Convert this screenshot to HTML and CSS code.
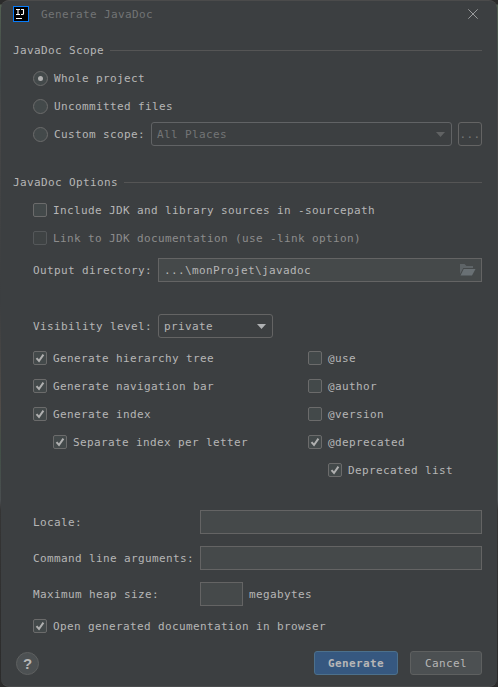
FILE: index.html
```html
<!DOCTYPE html>
<html lang="en">
<head>
<meta charset="utf-8">
<title>Generate JavaDoc</title>
<link rel="stylesheet" href="styles.css">
</head>
<body>
<svg width="0" height="0" class="defs">
  <symbol id="tick" viewBox="0 0 14 14"><path d="M3.5 7.2 L6 10 L10.4 3.6" fill="none" stroke="#b0b0b0" stroke-width="2"/></symbol>
</svg>
<main class="dialog">
  <header class="titlebar">
    <svg class="logo" width="16" height="16" viewBox="0 0 16 16">
      <rect x=".5" y=".5" width="15" height="15" fill="#000" stroke="#087cfa"/>
      <path d="M3 3.5h4M5 3.5v5M3 8.5h4M8 3.5h3M10.5 3.5V7.5Q10.5 8.5 9.5 8.5H8" fill="none" stroke="#fff" stroke-width="1.1"/>
      <path d="M3 12.5h6" stroke="#fff"/>
    </svg>
    <span class="title">Generate JavaDoc</span>
    <svg class="close" width="10" height="10" viewBox="0 0 10 10"><path d="M.3 .3L9.7 9.7M9.7 .3L.3 9.7" stroke="#999b9c" stroke-width="1"/></svg>
  </header>

  <h2 class="section"><span>JavaDoc Scope</span></h2>
  <div class="rows">
    <label class="row"><i class="radio on"></i><span>Whole project</span></label>
    <label class="row"><i class="radio"></i><span>Uncommitted files</span></label>
    <div class="row"><i class="radio"></i><span>Custom scope:</span>
      <div class="combo scope disabled"><span>All Places</span><svg width="9" height="5"><path d="M0 0h9L4.5 5z" fill="#606263"/></svg></div>
      <div class="more"><span>...</span></div>
    </div>
  </div>

  <h2 class="section options"><span>JavaDoc Options</span></h2>
  <div class="rows">
    <label class="row"><i class="check"></i><span>Include JDK and library sources in -sourcepath</span></label>
    <label class="row off"><i class="check"></i><span>Link to JDK documentation (use -link option)</span></label>
    <div class="row tall"><span class="name">Output directory:</span>
      <div class="field path"><span>...\monProjet\javadoc</span><svg width="16" height="12" viewBox="0 0 16 12"><path d="M0 10V0h4.5l2 2H13v2H3.3z" fill="#5e6467"/><path d="M3.7 5H15.5L12 11.5H.5z" fill="#697074"/></svg></div>
    </div>
    <div class="row tall visibility"><span class="name">Visibility level:</span>
      <div class="combo level"><span>private</span><svg width="9" height="5"><path d="M0 0h9L4.5 5z" fill="#afb1b3"/></svg></div>
    </div>
    <div class="columns">
      <div>
        <label class="row"><i class="check"><svg><use href="#tick"/></svg></i><span>Generate hierarchy tree</span></label>
        <label class="row"><i class="check"><svg><use href="#tick"/></svg></i><span>Generate navigation bar</span></label>
        <label class="row"><i class="check"><svg><use href="#tick"/></svg></i><span>Generate index</span></label>
        <label class="row sub"><i class="check"><svg><use href="#tick"/></svg></i><span>Separate index per letter</span></label>
      </div>
      <div>
        <label class="row"><i class="check"></i><span>@use</span></label>
        <label class="row"><i class="check"></i><span>@author</span></label>
        <label class="row"><i class="check"></i><span>@version</span></label>
        <label class="row"><i class="check"><svg><use href="#tick"/></svg></i><span>@deprecated</span></label>
        <label class="row sub"><i class="check"><svg><use href="#tick"/></svg></i><span>Deprecated list</span></label>
      </div>
    </div>
    <div class="form">
      <span>Locale:</span><div class="field"></div>
      <span>Command line arguments:</span><div class="field"></div>
      <span>Maximum heap size:</span><div class="heap"><div class="field"></div><span>megabytes</span></div>
    </div>
    <label class="row open"><i class="check"><svg><use href="#tick"/></svg></i><span>Open generated documentation in browser</span></label>
  </div>

  <footer class="footer">
    <div class="help">?</div>
    <div class="button primary">Generate</div>
    <div class="button">Cancel</div>
  </footer>
</main>
</body>
</html>
```

FILE: styles.css
```css
* { box-sizing: border-box; }
body {
  margin: 0;
  height: 687px;
  padding: 0 1px;
  overflow: hidden;
  background: linear-gradient(#2b2b2b 0 4px, #536052 5px, #3e4546 80px, #474747 110px, #3b3e40 300px, #514c48 410px, #425047 450px, #4a4e50 500px, #353535 510px, #2b2b2b);
  font: 11px/14px "DejaVu Sans Mono", monospace;
  letter-spacing: .378px;
  color: #b6b6b6;
}
.defs { position: absolute; }
.dialog {
  height: 687px;
  padding: 0 15px 0 12px;
  background: #3c3f41;
  border-top: 1px solid #4b4b4b;
  border-bottom: 1px solid #494b4c;
  border-radius: 8px;
}
.titlebar { display: flex; align-items: center; height: 26px; color: #727475; }
.title { margin-left: 12px; padding-top: 2px; }
.close { margin: 0 4px 0 auto; }
.section {
  display: flex;
  align-items: center;
  gap: 6px;
  height: 14px;
  margin: 16px 0 7px;
  font: inherit;
}
.section span, .row span, .form span { padding-top: 2px; white-space: nowrap; }
.section::after { content: ""; flex: 1; height: 1px; margin-top: 1px; background: #555; }
.section.options { margin: 27px 0 7px; }
.rows { padding-left: 20px; }
.row { display: flex; align-items: center; height: 28px; }
.row.tall { height: 36px; }
.row.off { color: #8c8c8c; }
.row.sub { padding-left: 20px; }
.check {
  flex: none;
  width: 14px;
  height: 14px;
  margin-right: 6px;
  border: 1px solid #6b6b6b;
  border-radius: 2px;
  background: #43494a;
}
.off .check { border-color: #55585a; background: #3f4344; }
.check svg { display: block; width: 14px; height: 14px; margin: -1px; }
.radio {
  display: flex;
  flex: none;
  width: 15px;
  height: 15px;
  margin: 1px 6px 0 0;
  border: 1px solid #6b6b6b;
  border-radius: 50%;
  background: #43494a;
}
.radio.on::after { content: ""; width: 5px; height: 5px; margin: auto; border-radius: 50%; background: #b0b0b0; }
.combo, .field, .more {
  display: flex;
  align-items: center;
  height: 24px;
  border: 1px solid #646464;
}
.combo { justify-content: space-between; padding: 0 6px 0 5px; border-radius: 3px; }
.disabled { color: #737576; border-color: #616365; }
.scope { width: 301px; margin-left: 6px; }
.more { justify-content: center; width: 24px; margin-left: auto; border-radius: 3px; color: #777; }
.name { width: 125px; }
.field { background: #45494a; }
.path { flex: 1; justify-content: space-between; padding: 0 5px; }
.visibility { margin-top: 20px; }
.level { width: 115px; }
.columns { display: grid; grid-template-columns: 275px 1fr; height: 154px; }
.form {
  display: grid;
  grid-template-columns: 167px 1fr;
  grid-auto-rows: 36px;
  align-items: center;
  margin-top: 6px;
}
.heap { display: flex; align-items: center; gap: 6px; }
.heap .field { width: 43px; }
.footer { display: flex; align-items: center; gap: 12px; height: 24px; margin-top: 11px; }
.help {
  width: 23px;
  height: 23px;
  margin: 0 auto 0 3px;
  border: 1px solid #5e6060;
  border-radius: 50%;
  background: #4c5052;
  font: bold 15px/21px "Liberation Sans", sans-serif;
  letter-spacing: 0;
  text-align: center;
}
.button {
  width: 72px;
  height: 24px;
  border: 1px solid #5e6060;
  border-radius: 3px;
  background: #4c5052;
  padding-top: 1px;
  line-height: 22px;
  text-align: center;
}
.primary { width: 84px; border-color: #4c708c; background: #365880; font-weight: bold; }
```
